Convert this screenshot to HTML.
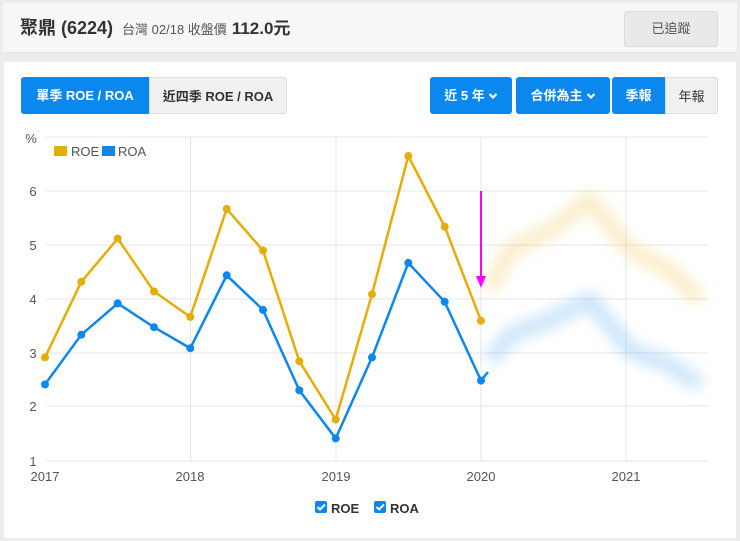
<!DOCTYPE html>
<html><head><meta charset="utf-8"><style>
*{margin:0;padding:0;box-sizing:border-box}
body{width:740px;height:541px;background:#ececec;font-family:"Liberation Sans","Noto Sans CJK TC",sans-serif;position:relative;overflow:hidden}
.top{position:absolute;left:3px;top:3px;width:734px;height:50px;background:#f7f7f7;border-bottom:1px solid #e2e2e2}
.title{position:absolute;left:20px;top:14px;font-size:18px;font-weight:bold;color:#333}
.sub{font-size:13px;font-weight:normal;color:#555;margin-left:4px}
.price{font-size:17px;font-weight:bold;color:#333}
.track{position:absolute;left:624px;top:11px;width:94px;height:36px;background:#e9e9e9;border:1px solid #dcdcdc;border-radius:3px;font-size:13px;color:#555;text-align:center;line-height:34px}
.panel{position:absolute;left:4px;top:62px;width:732px;height:476px;background:#fff}
.btn{position:absolute;top:77px;height:37px;line-height:37px;font-size:13px;font-weight:bold;text-align:center}
.b{background:#0b88ee;color:#fff}
.g{background:#f1f1f1;color:#333;border:1px solid #ddd}
.btn svg{position:static;vertical-align:middle;margin-left:3px;margin-top:-2px}
svg.c{position:absolute;left:0;top:0}
</style></head><body>
<div class="top"></div>
<div class="title">聚鼎 (6224) <span class="sub">台灣 02/18 收盤價</span> <span class="price">112.0元</span></div>
<div class="track">已追蹤</div>
<div class="panel"></div>
<div class="btn b" style="left:21px;width:128px;border-radius:3px 0 0 3px">單季 ROE / ROA</div>
<div class="btn g" style="left:149px;width:138px;border-radius:0 3px 3px 0">近四季 ROE / ROA</div>
<div class="btn b" style="left:430px;width:82px;border-radius:3px">近 5 年<svg width="10" height="8"><path d="M1.5 2 L5 5.5 L8.5 2" stroke="#fff" stroke-width="2.2" fill="none"/></svg></div>
<div class="btn b" style="left:516px;width:94px;border-radius:3px">合併為主<svg width="10" height="8"><path d="M1.5 2 L5 5.5 L8.5 2" stroke="#fff" stroke-width="2.2" fill="none"/></svg></div>
<div class="btn b" style="left:612px;width:53px;border-radius:3px 0 0 3px">季報</div>
<div class="btn g" style="left:665px;width:53px;border-radius:0 3px 3px 0;font-weight:normal">年報</div>
<svg class="c" width="740" height="541" font-family="Liberation Sans, sans-serif">
<defs><filter id="bl"><feGaussianBlur stdDeviation="7"/></filter></defs>
<g stroke="#e6e6e6" stroke-width="1">
<line x1="46" y1="137" x2="708" y2="137"/>
<line x1="46" y1="191" x2="708" y2="191"/><line x1="46" y1="245" x2="708" y2="245"/>
<line x1="46" y1="299" x2="708" y2="299"/><line x1="46" y1="353" x2="708" y2="353"/>
<line x1="46" y1="406" x2="708" y2="406"/><line x1="46" y1="461" x2="708" y2="461"/>
<line x1="190.5" y1="137" x2="190.5" y2="461"/><line x1="336" y1="137" x2="336" y2="461"/>
<line x1="481" y1="137" x2="481" y2="461"/><line x1="626" y1="137" x2="626" y2="461"/>
</g>
<g font-size="13" fill="#555" text-anchor="middle">
<text x="31" y="143">%</text>
<text x="33" y="196">6</text><text x="33" y="250">5</text><text x="33" y="304">4</text>
<text x="33" y="358">3</text><text x="33" y="411">2</text><text x="33" y="466">1</text>
<text x="45" y="481">2017</text><text x="190" y="481">2018</text><text x="336" y="481">2019</text>
<text x="481" y="481">2020</text><text x="626" y="481">2021</text>
</g>
<rect x="54" y="146" width="13" height="10" fill="#e5ad06"/><text x="71" y="156" font-size="13" fill="#555">ROE</text>
<rect x="102" y="146" width="13" height="10" fill="#0b88ee"/><text x="118" y="156" font-size="13" fill="#555">ROA</text>
<g filter="url(#bl)" fill="none" stroke-width="16" opacity="0.22">
<polyline stroke="#e5ad06" points="490,290 510,250 550,230 590,200 630,250 670,270 700,300"/>
<polyline stroke="#0b88ee" points="490,360 510,335 550,320 590,300 630,350 670,365 700,385"/>
</g>
<polyline fill="none" stroke="#e5ad06" stroke-width="2.5" points="45,357.4 81.3,281.8 117.7,238.6 154,291.5 190.3,316.9 226.7,208.9 263,250.5 299.3,361.2 335.7,419.5 372,294.2 408.3,156 444.7,226.7 481,320.7"/>
<polyline fill="none" stroke="#0b88ee" stroke-width="2.5" points="45,384.4 81.3,334.7 117.7,303.4 154,327.2 190.3,348.2 226.7,275.3 263,309.9 299.3,390.3 335.7,438.4 372,357.4 408.3,262.9 444.7,301.8 481,380.6 488,372"/>
<g fill="#e5ad06"><circle cx="45" cy="357.4" r="4"/><circle cx="81.3" cy="281.8" r="4"/><circle cx="117.7" cy="238.6" r="4"/><circle cx="154" cy="291.5" r="4"/><circle cx="190.3" cy="316.9" r="4"/><circle cx="226.7" cy="208.9" r="4"/><circle cx="263" cy="250.5" r="4"/><circle cx="299.3" cy="361.2" r="4"/><circle cx="335.7" cy="419.5" r="4"/><circle cx="372" cy="294.2" r="4"/><circle cx="408.3" cy="156" r="4"/><circle cx="444.7" cy="226.7" r="4"/><circle cx="481" cy="320.7" r="4"/></g>
<g fill="#0b88ee"><circle cx="45" cy="384.4" r="4"/><circle cx="81.3" cy="334.7" r="4"/><circle cx="117.7" cy="303.4" r="4"/><circle cx="154" cy="327.2" r="4"/><circle cx="190.3" cy="348.2" r="4"/><circle cx="226.7" cy="275.3" r="4"/><circle cx="263" cy="309.9" r="4"/><circle cx="299.3" cy="390.3" r="4"/><circle cx="335.7" cy="438.4" r="4"/><circle cx="372" cy="357.4" r="4"/><circle cx="408.3" cy="262.9" r="4"/><circle cx="444.7" cy="301.8" r="4"/><circle cx="481" cy="380.6" r="4"/></g>
<line x1="481" y1="191" x2="481" y2="278" stroke="#f0f" stroke-width="2"/>
<polygon points="476,276 486,276 481,288" fill="#f0f"/>
<rect x="315" y="501" width="12" height="12" rx="2" fill="#0b88ee"/><path d="M317.5 507 l2.5 2.5 l5 -5" stroke="#fff" stroke-width="2" fill="none"/>
<text x="331" y="513" font-size="13" font-weight="bold" fill="#333">ROE</text>
<rect x="374" y="501" width="12" height="12" rx="2" fill="#0b88ee"/><path d="M376.5 507 l2.5 2.5 l5 -5" stroke="#fff" stroke-width="2" fill="none"/>
<text x="390" y="513" font-size="13" font-weight="bold" fill="#333">ROA</text>
</svg>
</body></html>
